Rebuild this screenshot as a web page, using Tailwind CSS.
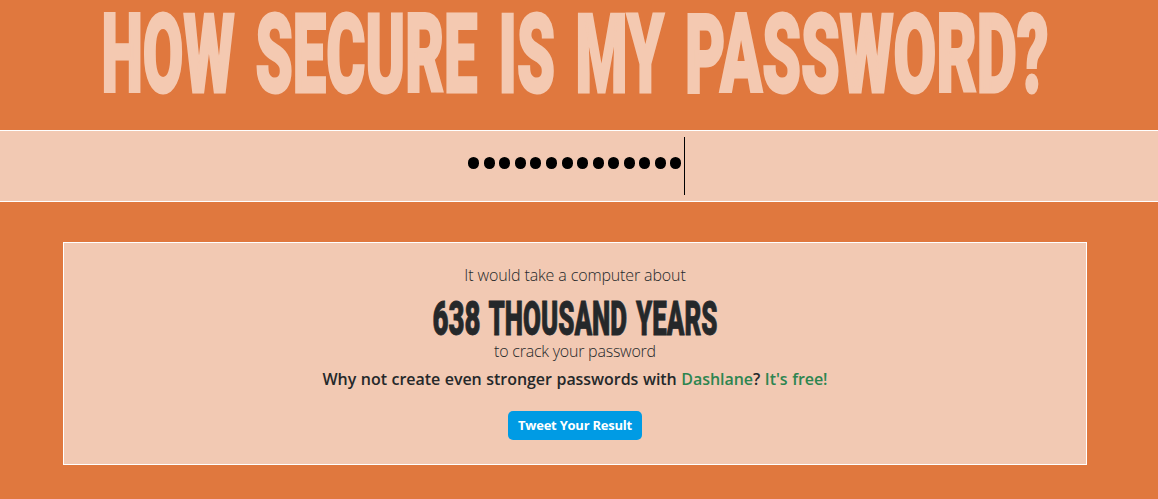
<!DOCTYPE html>
<html lang="en">

<head>
    <meta charset="UTF-8">
    <meta name="viewport" content="width=device-width, initial-scale=1.0">
    <title>How Secure Is My Password?</title>
    <script src="https://cdn.jsdelivr.net/npm/@tailwindcss/browser@4"></script>
</head>

<body class="bg-[#e0783e] h-[499px] overflow-hidden font-['Open_Sans',sans-serif] text-[#25282a]">
    <!-- each word is fitted to its own width to get the condensed poster lettering -->
    <h1 class="h-[130px]">
        <svg class="block w-full h-[130px] overflow-visible fill-[#f4c9b1] stroke-[#f4c9b1] font-['Roboto',sans-serif] font-black" viewBox="0 0 1158 130" font-size="108.5" stroke-width="2.8">
            <text x="101.5" y="92" textLength="133" lengthAdjust="spacingAndGlyphs">HOW</text>
            <text x="255.5" y="92" textLength="222" lengthAdjust="spacingAndGlyphs">SECURE</text>
            <text x="498.5" y="92" textLength="56.5" lengthAdjust="spacingAndGlyphs">IS</text>
            <text x="575.5" y="92" textLength="88.5" lengthAdjust="spacingAndGlyphs">MY</text>
            <text x="685" y="92" textLength="363.5" lengthAdjust="spacingAndGlyphs">PASSWORD?</text>
        </svg>
    </h1>

    <div class="h-[72px] border-y border-white bg-[#f2c9b3] flex pl-[468.3px]">
        <div class="flex pt-[26px] gap-[4.56px]">
            <i class="w-[11px] h-3 rounded-full bg-black"></i>
            <i class="w-[11px] h-3 rounded-full bg-black"></i>
            <i class="w-[11px] h-3 rounded-full bg-black"></i>
            <i class="w-[11px] h-3 rounded-full bg-black"></i>
            <i class="w-[11px] h-3 rounded-full bg-black"></i>
            <i class="w-[11px] h-3 rounded-full bg-black"></i>
            <i class="w-[11px] h-3 rounded-full bg-black"></i>
            <i class="w-[11px] h-3 rounded-full bg-black"></i>
            <i class="w-[11px] h-3 rounded-full bg-black"></i>
            <i class="w-[11px] h-3 rounded-full bg-black"></i>
            <i class="w-[11px] h-3 rounded-full bg-black"></i>
            <i class="w-[11px] h-3 rounded-full bg-black"></i>
            <i class="w-[11px] h-3 rounded-full bg-black"></i>
            <i class="w-[11px] h-3 rounded-full bg-black"></i>
        </div>
        <!-- caret -->
        <div class="w-px h-[58px] mt-1.5 ml-[2.4px] bg-black"></div>
    </div>

    <div class="w-[1024px] h-[223px] mt-10 ml-[63px] border border-white bg-[#f2c9b3] flex flex-col items-center text-base leading-6 whitespace-nowrap">
        <p class="mt-5 font-light tracking-[-0.13px]">It would take a computer about</p>
        <svg class="block w-[300px] h-[52px] overflow-visible fill-current stroke-current font-['Roboto',sans-serif] font-black" viewBox="0 0 300 52" font-size="48.8" stroke-width="0.9">
            <text x="7.5" y="47.6" textLength="48" lengthAdjust="spacingAndGlyphs">638</text>
            <text x="63.5" y="47.6" textLength="138.5" lengthAdjust="spacingAndGlyphs">THOUSAND</text>
            <text x="211" y="47.6" textLength="81.5" lengthAdjust="spacingAndGlyphs">YEARS</text>
        </svg>
        <p class="font-light tracking-[-0.23px]">to crack your password</p>
        <p class="mt-1 font-semibold tracking-[-0.05px] [word-spacing:0.5px]">Why not create even stronger passwords with <a class="text-[#2d8550]">Dashlane</a>? <a class="text-[#2d8550]">It's free!</a></p>
        <button class="mt-5 w-[134px] h-[29px] rounded-[5px] bg-[#009be4] text-white text-[13px] leading-[18px] pb-0.5 font-bold tracking-[-0.23px]">Tweet Your Result</button>
    </div>
</body>

</html>
